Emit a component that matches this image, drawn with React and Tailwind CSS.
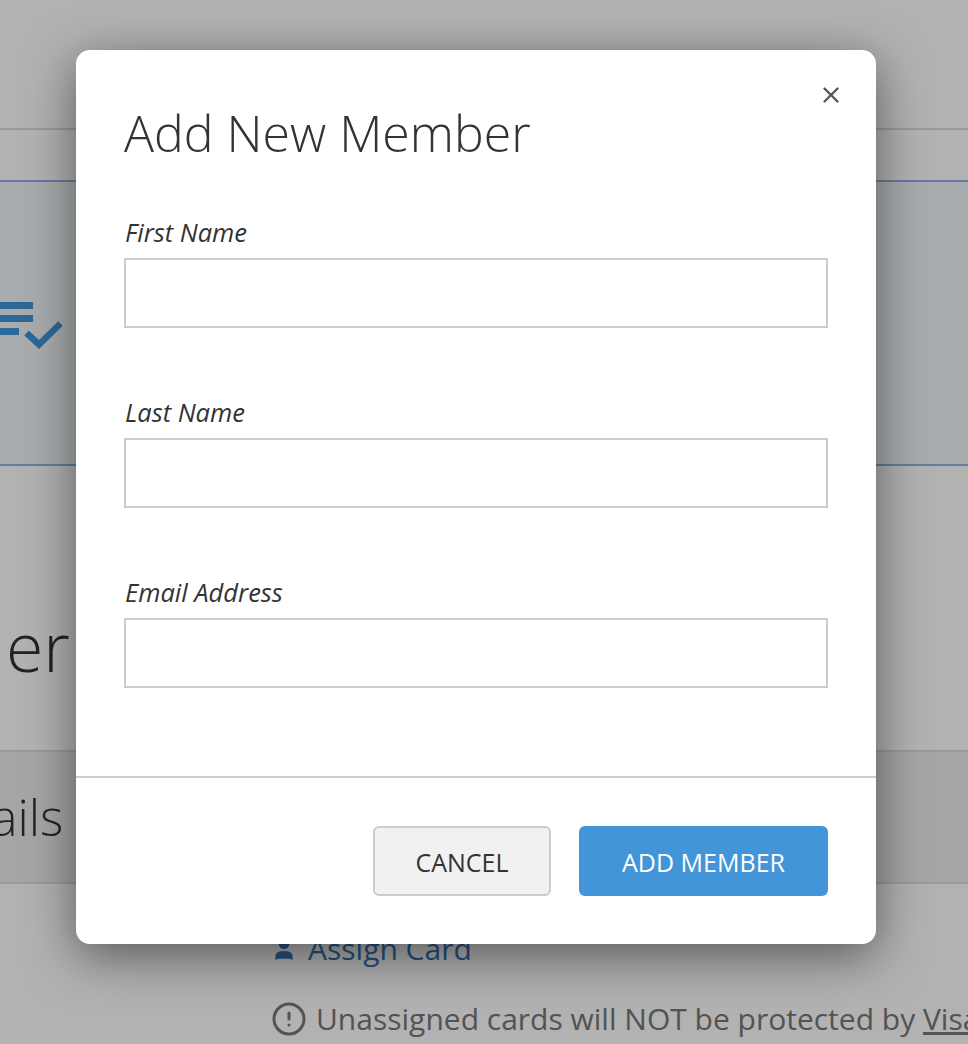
import React from "react";
import { X, User, CircleAlert } from "lucide-react";

const Field = ({ label }) => (
  <div className="mb-[70px]">
    <label className="block h-[40px] text-[25.500px] leading-[28px] pl-[1px] italic text-[#333]">{label}</label>
    <input type="text" className="block w-full h-[70px] border-2 border-[#ccc] bg-white" />
  </div>
);

const Page = () => (
  <div className="h-[1044px] overflow-hidden bg-white font-['Open_Sans',sans-serif]">
    <div className="h-[130px] border-b-2 border-[#ddd]" />
    <div className="h-[52px] border-b-2 border-[#8fb4e3]" />
    <div className="h-[284px] border-b-2 border-[#8fb4e3] bg-[#f2f7fa] flex items-start pt-[118px]">
      <svg width="64" height="50" viewBox="0 0 64 50" className="text-[#4295d8]">
        <path fill="currentColor" d="M0 2h33v7H0zM0 15h33v7H0zM0 28h19v7H0z" />
        <path fill="none" stroke="currentColor" strokeWidth="6.500" d="M26.500 33l12.500 11.500L60.500 23.500" />
      </svg>
    </div>
    <div className="h-[286px] border-b-2 border-[#ddd] flex items-start pt-[136px]">
      <span className="ml-[6px] text-[68px] leading-[88px] font-light text-[#333]">er</span>
    </div>
    <div className="h-[132px] border-b-2 border-[#ddd] bg-[#eee] flex items-center">
      <span className="text-[50px] leading-[64px] font-light text-[#333] -ml-[9px]">ails</span>
    </div>
    <div className="pl-[271px] pt-[45px]">
      <div className="flex items-center gap-[11px] text-[30px] leading-[40px] text-[#3578b7]">
        <User size={26} fill="currentColor" strokeWidth={2} className="shrink-0" />
        <span>Assign Card</span>
      </div>
      <div className="flex items-center gap-[9px] mt-[30px] text-[30px] leading-[40px] text-[#777] whitespace-nowrap">
        <CircleAlert size={36} strokeWidth={2} className="shrink-0" />
        <span>
          Unassigned cards will NOT be protected by <span className="underline">Visa</span>
        </span>
      </div>
    </div>
  </div>
);

export default function App() {
  return (
    <div className="relative h-[1044px] w-[968px] overflow-hidden font-['Open_Sans',sans-serif]">
      <Page />
      <div className="absolute inset-0 bg-black/30" />
      <div className="absolute left-[76px] top-[50px] w-[800px] h-[894px] rounded-[14px] bg-white shadow-[0_12px_50px_rgba(0,0,0,0.5)]">
        <button className="absolute right-[32px] top-[32px] text-[#555]">
          <X size={26} strokeWidth={2.2} />
        </button>
        <div className="px-[48px] pt-[47px]">
          <h2 className="h-[121px] text-[50px] leading-[72px] font-light text-[#333]">Add New Member</h2>
          <Field label="First Name" />
          <Field label="Last Name" />
          <Field label="Email Address" />
        </div>
        <div className="mt-[88px] border-t-2 border-[#ccc] flex justify-end gap-[28px] px-[48px] pt-[48px]">
          <button className="w-[178px] h-[70px] pt-[3px] rounded-[6px] border-2 border-[#ccc] bg-[#f1f1f1] text-[25px] text-[#333]">CANCEL</button>
          <button className="w-[249px] h-[70px] pt-[3px] rounded-[6px] bg-[#4295d8] text-[25px] text-white">ADD MEMBER</button>
        </div>
      </div>
    </div>
  );
}
